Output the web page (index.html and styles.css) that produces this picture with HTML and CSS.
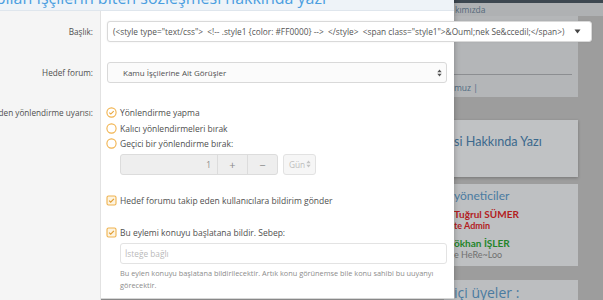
FILE: index.html
```html
<!DOCTYPE html>
<html lang="tr">
  <head>
    <meta charset="UTF-8" />
    <meta name="viewport" content="width=device-width, initial-scale=1.0" />
    <title>Konuyu taşı</title>
    <link rel="stylesheet" href="styles.css">
  </head>
  <body>
    <div class="page">
      <div class="topbar"></div>
      <div class="navstrip">
        <div class="side"><span>kımızda</span></div>
      </div>
      <div class="side">
        <div class="card card-nav">
          <div class="rule"></div>
          <div class="nav-links">muz |</div>
        </div>
        <div class="card card-title">si Hakkında Yazı</div>
        <div class="card card-staff">
          <div class="card-head">yöneticiler</div>
          <div class="staff red">Tuğrul SÜMER</div>
          <div class="staff-role red">te Admin</div>
          <div class="staff green">ökhan İŞLER</div>
          <div class="staff-role">e HeRe~Loo</div>
        </div>
        <div class="card card-online">
          <div class="card-head big">içi üyeler :</div>
        </div>
      </div>
    </div>

    <div class="modal">
      <div class="modal-title">
        <span>Konuyu taşı: Kamuya alımı yapılan İşçilerin biten sözleşmesi hakkında yazı</span>
      </div>
      <div class="modal-body">
        <div class="label row-input">Başlık:</div>
        <div class="field row-input">
          <div class="control wide">
            <span class="value">(&lt;style type="text/css"&gt;&nbsp; &lt;!-- .style1 {color: #FF0000} --&gt;&nbsp; &lt;/style&gt;&nbsp; &lt;span class="style1"&gt;&amp;Ouml;nek Se&amp;ccedil;&lt;/span&gt;)</span>
            <svg class="caret" width="7" height="5" viewBox="0 0 7 5"><path d="M0.5 0.5 L6.5 0.5 L3.5 4.5 Z" fill="#444"/></svg>
          </div>
        </div>

        <div class="label row-input last">Hedef forum:</div>
        <div class="field row-input last">
          <div class="control select">
            <span class="value">Kamu İşçilerine Ait Görüşler</span>
            <svg width="5" height="8" viewBox="0 0 5 8"><path d="M0.3 3.2 L2.5 0.5 L4.7 3.2 Z M0.3 4.8 L2.5 7.5 L4.7 4.8 Z" fill="#555"/></svg>
          </div>
        </div>

        <div class="label row-opts"><span>Eski yerinden yönlendirme uyarısı:</span></div>
        <div class="field row-opts">
          <div class="opt">
            <svg width="11" height="11" viewBox="0 0 11 11"><circle cx="5.5" cy="5.5" r="4.6" fill="#fff" stroke="#f1b24c" stroke-width="1.1"/><path d="M3.3 5.7 L4.8 7.1 L7.7 4.1" fill="none" stroke="#e9a53a" stroke-width="1.1"/></svg>
            <span>Yönlendirme yapma</span>
          </div>
          <div class="opt">
            <svg width="11" height="11" viewBox="0 0 11 11"><circle cx="5.5" cy="5.5" r="4.6" fill="#fff" stroke="#f1b24c" stroke-width="1.1"/></svg>
            <span>Kalıcı yönlendirmeleri bırak</span>
          </div>
          <div class="opt">
            <svg width="11" height="11" viewBox="0 0 11 11"><circle cx="5.5" cy="5.5" r="4.6" fill="#fff" stroke="#f1b24c" stroke-width="1.1"/></svg>
            <span>Geçici bir yönlendirme bırak:</span>
          </div>
          <div class="expire">
            <div class="number">
              <span class="num">1</span>
              <span class="step">+</span>
              <span class="step">−</span>
            </div>
            <div class="unit">
              <span>Gün</span>
              <svg width="5" height="8" viewBox="0 0 5 8"><path d="M0.3 3.2 L2.5 0.5 L4.7 3.2 Z M0.3 4.8 L2.5 7.5 L4.7 4.8 Z" fill="#c4c4c4"/></svg>
            </div>
          </div>

          <div class="opt check first-check">
            <svg width="11" height="11" viewBox="0 0 11 11"><rect x="1" y="1" width="9" height="9" rx="1.5" fill="#fdf4e1" stroke="#efb24e" stroke-width="1.1"/><path d="M3.1 5.6 L4.7 7.1 L7.9 3.9" fill="none" stroke="#e29d33" stroke-width="1.2"/></svg>
            <span>Hedef forumu takip eden kullanıcılara bildirim gönder</span>
          </div>
          <div class="opt check second-check">
            <svg width="11" height="11" viewBox="0 0 11 11"><rect x="1" y="1" width="9" height="9" rx="1.5" fill="#fdf4e1" stroke="#efb24e" stroke-width="1.1"/><path d="M3.1 5.6 L4.7 7.1 L7.9 3.9" fill="none" stroke="#e29d33" stroke-width="1.2"/></svg>
            <span>Bu eylemi konuyu başlatana bildir. Sebep:</span>
          </div>
          <div class="reason">
            <div class="control text"><span class="placeholder">İsteğe bağlı</span></div>
            <p class="hint">Bu eylen konuyu başlatana bildirilecektir. Artık konu görünemse bile konu sahibi bu uuyanyı görecektir.</p>
          </div>
        </div>
      </div>
    </div>
  </body>
</html>
```

FILE: styles.css
```css
body {
  margin: 0;
  background-color: #9d9d9d;
  font-family: "Open Sans", "Noto Sans", sans-serif;
  overflow: hidden;
  height: 300px;
}
.topbar {
  height: 3px;
  background-color: #3d4750;
}
.navstrip {
  height: 13px;
  background-color: #afb1b3;
  font-size: 8.5px;
  line-height: 14px;
  color: #55697a;
}
.navstrip span {
  padding-left: 11px;
}
.side {
  margin-left: 444px;
  margin-right: 25px;
}
.card {
  background-color: #bcbec0;
  padding-left: 10px;
}
.card-nav {
  height: 81px;
  display: flex;
  flex-direction: column;
  justify-content: flex-end;
  padding-right: 6px;
  padding-bottom: 3px;
  box-sizing: border-box;
  background-color: #b4b6b8;
}
.card-nav .rule {
  border-top: 1px solid #8c8e91;
  margin-left: -10px;
}
.nav-links {
  margin-top: 7px;
  font-size: 8.5px;
  line-height: 12px;
  color: #4f6a82;
}
.card-title {
  margin-top: 23px;
  height: 57px;
  box-sizing: border-box;
  padding-top: 12px;
  font-family: Lato, "Open Sans", sans-serif;
  font-size: 12.6px;
  line-height: 20px;
  color: #3c698d;
  background-color: #c0c2c4;
  box-shadow: 0 1px 3px rgba(0, 0, 0, 0.25);
}
.card-staff {
  margin-top: 7px;
  height: 82px;
  box-sizing: border-box;
  padding-top: 4px;
  font-family: Lato, "Open Sans", sans-serif;
  background-color: #bec0c2;
}
.card-head {
  font-size: 12px;
  line-height: 16px;
  color: #4a7ba1;
}
.staff {
  margin-top: 4px;
  font-size: 10px;
  font-weight: bold;
  line-height: 12px;
}
.staff-role {
  font-size: 9px;
  line-height: 12px;
  color: #707070;
}
.staff-role.red {
  font-weight: bold;
}
.red {
  color: #b3201f;
}
.green {
  color: #24852a;
  margin-top: 5px;
}
.card-online {
  margin-top: 14px;
  height: 40px;
  padding-top: 4px;
}
.card-head.big {
  font-size: 14px;
  line-height: 18px;
}

/* modal */
.modal {
  position: absolute;
  left: -150px;
  top: -14px;
  width: 604px;
  height: 312px;
  background-color: #fff;
  border-bottom: 1px solid #d6d6d6;
  box-shadow: 0 0 6px rgba(0, 0, 0, 0.3);
  color: #4f4f4f;
  font-size: 8.3px;
}
.modal-title {
  height: 25px;
  box-sizing: border-box;
  border-bottom: 1px solid #dfe6ed;
  background-color: #eef3f8;
  display: flex;
  justify-content: flex-end;
  align-items: flex-end;
  padding: 0 128px 4px 0;
  font-size: 16px;
  line-height: 16px;
  color: #4a9ee0;
  white-space: nowrap;
  overflow: hidden;
}
.modal-body {
  display: grid;
  grid-template-columns: 251px minmax(0, 1fr);
}
.label {
  background-color: #f5f5f5;
  border-right: 1px solid #e2e2e2;
  padding: 10px 7px 0 0;
  display: flex;
  justify-content: flex-end;
  white-space: nowrap;
  font-size: 8.2px;
}
.field {
  padding: 10px 7px 10px 6px;
  min-width: 0;
}
.row-input.label {
  line-height: 21px;
}
.row-input.last.field {
  padding-bottom: 12px;
}
.row-opts.label {
  line-height: 15.5px;
}
.control {
  height: 21px;
  box-sizing: border-box;
  border: 1px solid #d9d9d9;
  border-radius: 3px;
  background-color: #fff;
  display: flex;
  align-items: center;
  white-space: nowrap;
}
.control.wide {
  width: 485px;
  padding: 0 10px 0 5px;
  justify-content: space-between;
  font-size: 8.3px;
  color: #555;
  box-shadow: 0 0 2px rgba(0, 0, 0, 0.08);
}
.control.select {
  padding: 0 4px 0 15px;
  justify-content: space-between;
  background-color: #fbfbfb;
  font-size: 8px;
}
.opt {
  display: flex;
  align-items: center;
  gap: 3px;
  height: 15.5px;
  font-size: 8.5px;
  margin-left: -1px;
}
.expire {
  display: flex;
  gap: 5px;
  margin: 2px 0 0 13px;
}
.number {
  display: flex;
  height: 21px;
  width: 158px;
  box-sizing: border-box;
  border: 1px solid #dcdcdc;
  border-radius: 3px;
  background-color: #eeeeee;
  color: #8a8a8a;
}
.num {
  flex: 1;
  text-align: right;
  padding-right: 6px;
  line-height: 19px;
}
.step {
  width: 29px;
  text-align: center;
  border-left: 1px solid #dcdcdc;
  line-height: 19px;
  font-size: 11px;
}
.unit {
  height: 21px;
  width: 33px;
  box-sizing: border-box;
  border: 1px solid #e2e2e2;
  border-radius: 3px;
  background-color: #f6f6f6;
  color: #bdbdbd;
  display: flex;
  align-items: center;
  justify-content: space-between;
  padding: 0 4px 0 5px;
}
.first-check {
  margin-top: 18px;
}
.second-check {
  margin-top: 17px;
}
.reason {
  margin: 2px 0 0 13px;
}
.control.text {
  padding-left: 4px;
  border-color: #e3e3e3;
}
.placeholder {
  color: #b9b9b9;
}
.hint {
  margin: 3px 0 0;
  font-size: 7.35px;
  line-height: 12px;
  color: #8c8c8c;
}
```
